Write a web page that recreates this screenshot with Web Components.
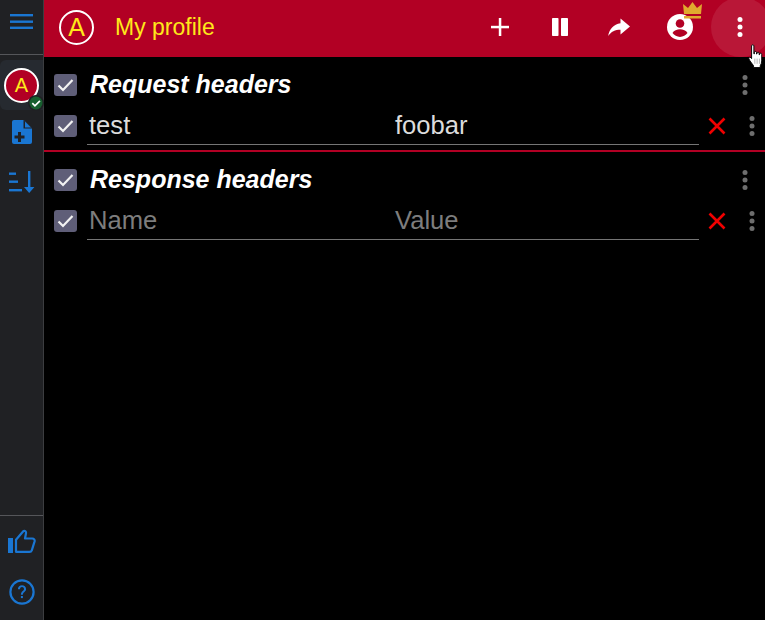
<!DOCTYPE html>
<html>
<head>
<meta charset="utf-8">
<style>
    html, body { margin: 0; padding: 0; height: 100%; background: #000; overflow: hidden; }
    body { font-family: "Liberation Sans", Arial, sans-serif; }
</style>
</head>
<body>
<app-shell>
    <side-bar slot="side"></side-bar>
    <top-bar slot="top"></top-bar>
    <header-section title="Request headers" slot="main">
        <header-row name="test" value="foobar"></header-row>
    </header-section>
    <header-section title="Response headers" slot="main" last>
        <header-row placeholder></header-row>
    </header-section>
</app-shell>

<script>
const dots = (color) => `<svg width="24" height="24" viewBox="0 0 24 24" fill="${color}"><circle cx="12" cy="4.4" r="2.5"/><circle cx="12" cy="12" r="2.5"/><circle cx="12" cy="19.6" r="2.5"/></svg>`;

class AppShell extends HTMLElement {
    constructor() {
        super();
        this.attachShadow({ mode: 'open' }).innerHTML = `
        <style>
            :host { display: flex; width: 765px; height: 620px; background: #000; overflow: hidden; position: relative; }
            .right { flex: 1; display: flex; flex-direction: column; min-width: 0; }
            .cursor { position: absolute; left: 747px; top: 44px; }
        </style>
        <slot name="side"></slot>
        <div class="right">
            <slot name="top"></slot>
            <slot name="main"></slot>
        </div>
        <svg class="cursor" width="17" height="24" viewBox="0 0 14.500 23">
            <path d="M3.500 1.800c0-1.400 2.200-1.400 2.200 0v7.600h.5V8c0-1.200 2-1.200 2 0v1.600h.5V8.800c0-1.200 2-1.200 2 0v1.400h.5V9.600c0-1.200 2-1 2 .2v6.400c0 2-.6 3.200-1.400 4.600v1.800H5.400v-1.800C3.600 18.400 1.600 16 .9 14.200c-.5-1.400 1-2.200 2-1l.6.8z" fill="#fff" stroke="#000" stroke-width=".9"/>
            <path d="M6.600 14v5M8.800 14v5M11 14v5" stroke="#888" stroke-width=".6"/>
        </svg>`;
    }
}

class SideBar extends HTMLElement {
    constructor() {
        super();
        this.attachShadow({ mode: 'open' }).innerHTML = `
        <style>
            :host { display: flex; flex-direction: column; width: 43px; height: 620px; background: #202124; border-right: 1px solid #3c3d40; flex: none; position: relative; z-index: 1; }
            .menu { height: 44px; padding-top: 10px; border-bottom: 1px solid #55565a; display: flex; align-items: flex-start; justify-content: center; }
            .profile { margin-top: 5px; height: 50px; background: #262a30; border-radius: 6px 0 0 6px; position: relative; display: flex; align-items: center; justify-content: center; }
            .avatar { width: 31px; height: 31px; border: 2px solid #fff; border-radius: 50%; background: #b20024; color: #ffe81a; font-size: 20px; display: flex; align-items: center; justify-content: center; }
            .badge { position: absolute; left: 28px; top: 35px; width: 16px; height: 16px; }
            .add { margin: 10px 0 0 12px; height: 24px; }
            .sort { margin: 27px 0 0 9px; height: 22px; }
            .spacer { flex: 1; }
            .bottom { border-top: 1px solid #55565a; height: 105px; box-sizing: border-box; padding-top: 13px; display: flex; flex-direction: column; align-items: center; }
            .help { margin-top: 24px; }
        </style>
        <div class="menu">
            <svg width="24" height="20" viewBox="0 0 24 20" fill="#1a76d2"><rect x="0" y="4" width="23" height="2.400"/><rect x="0" y="10.500" width="23" height="2.400"/><rect x="0" y="16.600" width="23" height="2.400"/></svg>
        </div>
        <div class="profile">
            <div class="avatar">A</div>
            <svg class="badge" viewBox="0 0 16 16"><circle cx="8" cy="8" r="8" fill="#202124"/><circle cx="8" cy="8" r="6.500" fill="#17602f"/><path d="M4.300 8.200l2.600 2.600 5-5" fill="none" stroke="#fff" stroke-width="1.700"/></svg>
        </div>
        <svg class="add" width="20" height="24" viewBox="0 0 20 24"><path d="M2 0h9.500L20 8.500V22a2 2 0 0 1-2 2H2a2 2 0 0 1-2-2V2a2 2 0 0 1 2-2z" fill="#1a76d2"/><path d="M11.500 0L20 8.500h-8.500z" fill="#202124"/><path d="M13 1.500l6 6h-6z" fill="#1a76d2"/><path d="M6 12h3v3.500h3.500v3H9V22H6v-3.500H2.500v-3H6z" fill="#202124"/></svg>
        <svg class="sort" width="26" height="22" viewBox="0 0 26 22" fill="#1a76d2"><rect x="0" y="1.500" width="7" height="2.400"/><rect x="0" y="9.500" width="9" height="2.400"/><rect x="0" y="18" width="13" height="2.400"/><rect x="19" y="0" width="2.400" height="18"/><path d="M15 16h10.400l-5.200 6z"/></svg>
        <div class="spacer"></div>
        <div class="bottom">
            <svg width="28" height="26" viewBox="0 0 28 26"><rect x="0" y="9" width="5" height="15" fill="#1a76d2"/><path d="M8 22.800V10.800L15.500 2c1.600-.5 2.800.5 2.500 2.200L17 9.500h7.300c1.600 0 2.700 1.400 2.300 2.900l-2.800 9c-.4 1-1.200 1.500-2.200 1.500H9z" fill="none" stroke="#1a76d2" stroke-width="2.200" stroke-linejoin="round"/></svg>
            <svg class="help" width="26" height="26" viewBox="0 0 26 26"><circle cx="13" cy="13" r="11.600" fill="none" stroke="#1a76d2" stroke-width="2.200"/><path d="M8.900 10.200c0-2.400 1.900-4 4.100-4s4.100 1.500 4.100 3.700c0 2.900-3.200 2.900-3.200 5.900h-2c0-3.900 3.100-3.800 3.100-5.900 0-1.100-.9-1.900-2-1.900s-2 .8-2 2.200z" fill="#1a76d2"/><rect x="11.900" y="17" width="2" height="2.100" fill="#1a76d2"/></svg>
        </div>`;
    }
}

class TopBar extends HTMLElement {
    constructor() {
        super();
        this.attachShadow({ mode: 'open' }).innerHTML = `
        <style>
            :host { display: flex; align-items: center; height: 54px; padding-bottom: 3px; background: #b20024; flex: none; position: relative; overflow: hidden; }
            .logo { width: 31px; height: 31px; border: 2px solid #fff; border-radius: 50%; margin-left: 15px; color: #ffe81a; font-size: 25px; display: flex; align-items: center; justify-content: center; }
            .title { color: #ffe81a; font-size: 23px; margin-left: 21px; flex: 1; }
            .actions { display: flex; margin-right: -6px; }
            .btn { width: 60px; height: 54px; display: flex; align-items: center; justify-content: center; flex: none; position: relative; }
            .crown { position: absolute; left: 32px; top: 2px; }
            .hover::before { content: ""; position: absolute; left: 0; top: -3px; width: 60px; height: 60px; border-radius: 50%; background: rgba(255,255,255,.09); }
            .hover svg { position: relative; left: -1px; }
        </style>
        <div class="logo">A</div>
        <div class="title">My profile</div>
        <div class="actions">
            <div class="btn"><svg style="margin-left:-2px" width="20" height="20" viewBox="0 0 20 20" fill="#fff"><rect x="8.800" y="1" width="2.500" height="18"/><rect x="1" y="8.800" width="18" height="2.500"/></svg></div>
            <div class="btn"><svg style="margin-left:-2px" width="20" height="20" viewBox="0 0 20 20" fill="#fff"><rect x="2" y="1" width="6.500" height="18" rx=".8"/><rect x="11" y="1" width="7" height="18" rx=".8"/></svg></div>
            <div class="btn"><svg style="margin-left:-4px" width="24" height="20" viewBox="0 0 24 20" fill="#fff"><path d="M13.500 1.500l9.500 8-9.500 8v-4.800C8 12.700 4.200 14.500 1.200 19 2.300 12.500 6.500 7.300 13.500 6.300z"/></svg></div>
            <div class="btn">
                <svg style="margin-left:-2px" width="26" height="26" viewBox="0 0 26 26"><circle cx="13" cy="13" r="13" fill="#fff"/><circle cx="13" cy="9.500" r="4.300" fill="#b20024"/><path d="M5.500 19c1.300-2.600 4.600-3.800 7.500-3.800s6.200 1.200 7.500 3.800c-1.700 2.300-4.500 3.900-7.500 3.900S7.200 21.300 5.500 19z" fill="#b20024"/></svg>
                <svg class="crown" width="19" height="17" viewBox="0 0 19 17" fill="#e0a92e"><path d="M1 12L0 2l5 4 4.500-6L14 6l5-4-1 10z"/><rect x="1" y="14" width="17" height="2.500"/></svg>
            </div>
            <div class="btn hover">${dots('#fff')}</div>
        </div>`;
    }
}

class CheckBox extends HTMLElement {
    constructor() {
        super();
        this.attachShadow({ mode: 'open' }).innerHTML = `
        <style>
            :host { display: flex; width: 23px; height: 22px; background: #5f5e78; border-radius: 3px; align-items: center; justify-content: center; flex: none; }
        </style>
        <svg width="17" height="14" viewBox="0 0 17 14"><path d="M1.500 7.500l4.500 4.500 9.500-10" fill="none" stroke="#f2f2f2" stroke-width="2.200"/></svg>`;
    }
}

class HeaderSection extends HTMLElement {
    constructor() {
        super();
        this.attachShadow({ mode: 'open' }).innerHTML = `
        <style>
            :host { display: block; height: 93px; }
            :host(:not([last])) { border-bottom: 2px solid #b20024; }
            .head { display: flex; align-items: center; height: 24px; padding: 16px 0 0 10px; }
            .title { color: #fff; font: italic bold 25px "Liberation Sans", Arial, sans-serif; margin-left: 13px; flex: 1; margin-top: -1px; }
            .more { margin-right: 8px; display: flex; }
            .rows { margin-top: 9px; }
        </style>
        <div class="head">
            <check-box></check-box>
            <div class="title"></div>
            <div class="more">${dots('#6e6e6e')}</div>
        </div>
        <div class="rows"><slot></slot></div>`;
        this.shadowRoot.querySelector('.title').textContent = this.getAttribute('title');
    }
}

class HeaderRow extends HTMLElement {
    constructor() {
        super();
        const ph = this.hasAttribute('placeholder');
        const name = ph ? 'Name' : this.getAttribute('name');
        const value = ph ? 'Value' : this.getAttribute('value');
        this.attachShadow({ mode: 'open' }).innerHTML = `
        <style>
            :host { display: flex; align-items: center; height: 40px; padding-left: 10px; }
            .fields { align-self: flex-start; margin-left: 10px; width: 612px; height: 38px; border-bottom: 1px solid #757575; display: grid; grid-template-columns: 306px 1fr; align-items: center; font-size: 25.6px; color: ${ph ? '#7d7d7d' : '#dcdcdc'}; }
            .fields span { padding-left: 2px; }
            .del { margin-left: 8px; width: 20px; height: 20px; }
            .more { margin-left: 13px; display: flex; }
        </style>
        <check-box></check-box>
        <div class="fields"><span>${name}</span><span>${value}</span></div>
        <svg class="del" viewBox="0 0 20 20"><path d="M2.500 2.500l15 15M17.500 2.500l-15 15" stroke="#f00000" stroke-width="2.600" fill="none"/></svg>
        <div class="more">${dots('#6e6e6e')}</div>`;
    }
}

customElements.define('check-box', CheckBox);
customElements.define('header-row', HeaderRow);
customElements.define('header-section', HeaderSection);
customElements.define('top-bar', TopBar);
customElements.define('side-bar', SideBar);
customElements.define('app-shell', AppShell);
</script>
</body>
</html>
